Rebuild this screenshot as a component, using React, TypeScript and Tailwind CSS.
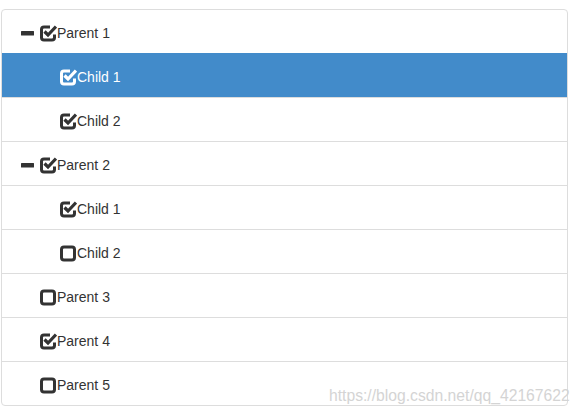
import React from "react";

type Node = {
  text: string;
  level: number;
  expand?: boolean;
  checked: boolean;
  selected?: boolean;
};

const nodes: Node[] = [
  { text: "Parent 1", level: 0, expand: true, checked: true },
  { text: "Child 1", level: 1, checked: true, selected: true },
  { text: "Child 2", level: 1, checked: true },
  { text: "Parent 2", level: 0, expand: true, checked: true },
  { text: "Child 1", level: 1, checked: true },
  { text: "Child 2", level: 1, checked: false },
  { text: "Parent 3", level: 0, checked: false },
  { text: "Parent 4", level: 0, checked: true },
  { text: "Parent 5", level: 0, checked: false },
];

function MinusIcon() {
  return (
    <svg width="14" height="18" viewBox="0 0 14 18" className="shrink-0">
      <rect x="0" y="7" width="13" height="4.5" rx="0.5" fill="currentColor" />
    </svg>
  );
}

function CheckIcon({ checked }: { checked: boolean }) {
  if (!checked) {
    return (
      <svg width="17" height="18" viewBox="0 0 17 18" className="shrink-0">
        <rect
          x="1.5"
          y="3"
          width="13"
          height="13"
          rx="2.5"
          fill="none"
          stroke="currentColor"
          strokeWidth="3"
        />
      </svg>
    );
  }
  return (
    <svg width="17" height="18" viewBox="0 0 17 18" className="shrink-0">
      <path
        d="M10 3H4Q1.5 3 1.5 5.5V13.5Q1.5 16 4 16H12Q14.5 16 14.5 13.5V10.5"
        fill="none"
        stroke="currentColor"
        strokeWidth="3"
      />
      <path
        d="M4.5 7.5L8 11L16 2.5"
        fill="none"
        stroke="currentColor"
        strokeWidth="3.2"
      />
    </svg>
  );
}

export default function App() {
  return (
    <div
      className="relative w-[580px] h-[414px] bg-white pt-[9px] pl-[1px]"
      style={{ fontFamily: '"Liberation Sans", Arial, sans-serif' }}
    >
      <ul className="w-[567px] border border-[#dddddd] rounded-[4px] overflow-hidden">
        {nodes.map((n, i) => (
          <li
            key={i}
            className={`flex items-center h-[41px] pt-[2px] box-content pl-[19px] text-[14px] ${
              i > 0 ? "border-t" : ""
            } ${
              n.selected
                ? "bg-[#428bca] text-white border-[#428bca]"
                : "text-[#333333] border-[#dddddd]"
            }`}
          >
            {n.level === 1 && <span className="w-[39px] shrink-0" />}
            {n.level === 0 && (
              <span className="w-[19px] shrink-0 flex">
                {n.expand && <MinusIcon />}
              </span>
            )}
            <CheckIcon checked={n.checked} />
            <span className="leading-[20px]">{n.text}</span>
          </li>
        ))}
      </ul>
      <div className="absolute left-[329px] top-[386px] text-[15.7px] leading-[20px] text-[#d4d4d4] whitespace-nowrap">
        https://blog.csdn.net/qq_42167622
      </div>
    </div>
  );
}
